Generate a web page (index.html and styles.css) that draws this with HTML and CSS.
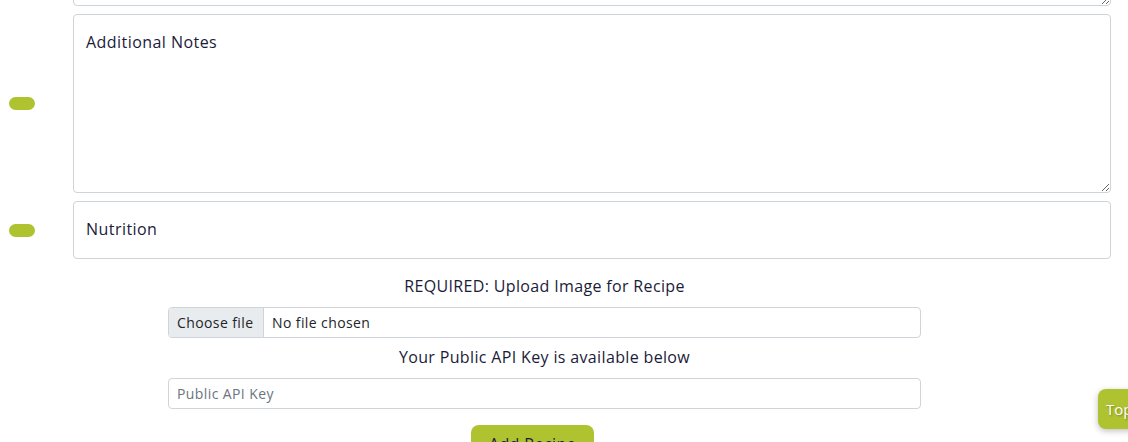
FILE: index.html
```html
<!DOCTYPE html>
<html>
<head>
<meta charset="utf-8">
<link rel="stylesheet" href="styles.css">
</head>
<body>
<div class="form">
  <div class="row row-top">
    <div class="side"></div>
    <textarea class="field area-top"></textarea>
  </div>
  <div class="row">
    <div class="side"><span class="pill"></span></div>
    <textarea class="field area-notes" placeholder="Additional Notes"></textarea>
  </div>
  <div class="row">
    <div class="side"><span class="pill"></span></div>
    <input class="field input-big" type="text" placeholder="Nutrition">
  </div>
  <div class="center">
    <p class="label">REQUIRED: Upload Image for Recipe</p>
    <div class="file">
      <span class="file-btn">Choose file</span>
      <span class="file-name">No file chosen</span>
    </div>
    <p class="label">Your Public API Key is available below</p>
    <input class="small-input" type="text" placeholder="Public API Key">
    <div class="submit-wrap"><button class="submit">Add Recipe</button></div>
  </div>
</div>
<button class="top-btn">Top</button>
</body>
</html>
```

FILE: styles.css
```css
html, body {
  margin: 0;
  padding: 0;
  background: #ffffff;
  overflow: hidden;
  height: 442px;
}
body {
  font-family: "Open Sans", "Noto Sans", sans-serif;
  color: #1b1b3a;
  position: relative;
}
.form {
  margin-top: -59px;
}
.row {
  display: flex;
  align-items: center;
  margin-bottom: 8px;
}
.side {
  width: 73px;
  flex: none;
  display: flex;
  padding-left: 9px;
  box-sizing: border-box;
}
.pill {
  display: block;
  width: 26px;
  height: 13px;
  border-radius: 7px;
  background: #afc22f;
}
.field {
  width: 1038px;
  box-sizing: border-box;
  border: 1px solid #ced4da;
  border-radius: 4px;
  font-family: inherit;
  font-size: 16px;
  letter-spacing: 0.45px;
  color: #1b1b3a;
  padding: 15px 12px;
  background: #fff;
  line-height: 24px;
  margin: 0;
}
.field::placeholder {
  color: #1b1b3a;
  opacity: 1;
}
.area-top {
  height: 65px;
  resize: vertical;
  display: block;
}
.area-notes {
  height: 179px;
  resize: vertical;
  display: block;
}
.input-big {
  height: 58px;
  padding: 14px 12px 16px;
}
.center {
  width: 753px;
  margin-left: 168px;
  display: flex;
  flex-direction: column;
  align-items: center;
}
.label {
  margin: 7px 0 9px;
  font-size: 16px;
  letter-spacing: 0.35px;
  line-height: 24px;
}
.file {
  width: 100%;
  box-sizing: border-box;
  height: 31px;
  border: 1px solid #ced4da;
  border-radius: 4px;
  display: flex;
  overflow: hidden;
  font-size: 14px;
  letter-spacing: 0.4px;
  color: #212529;
}
.file-btn {
  background: #e9ecef;
  border-right: 1px solid #ced4da;
  padding: 0 8px;
  display: flex;
  align-items: center;
  width: 95px;
  box-sizing: border-box;
}
.file-name {
  padding: 0 8px;
  display: flex;
  align-items: center;
}
.small-input {
  width: 100%;
  box-sizing: border-box;
  height: 31px;
  border: 1px solid #ced4da;
  border-radius: 4px;
  padding: 0 8px;
  font-family: inherit;
  font-size: 14px;
  letter-spacing: 0.4px;
  margin: 0;
}
.small-input::placeholder {
  color: #6c757d;
}
.submit-wrap {
  margin-top: 16px;
  width: 100%;
  display: flex;
  justify-content: flex-start;
  padding-left: 303px;
  box-sizing: border-box;
}
.submit {
  background: #afc22f;
  border: none;
  border-radius: 8px;
  width: 123px;
  height: 38px;
  font-family: inherit;
  font-size: 16px;
  letter-spacing: 0.4px;
  color: #1b1b3a;
  padding: 0;
}
.top-btn {
  position: absolute;
  left: 1098px;
  top: 389px;
  width: 50px;
  height: 40px;
  background: #afc22f;
  border: none;
  border-radius: 8px;
  color: #fff;
  font-family: inherit;
  font-size: 15px;
  text-align: left;
  padding: 0 0 0 8px;
  box-shadow: 0 2px 6px rgba(0,0,0,0.25);
  text-shadow: 1px 1px 2px rgba(0,0,0,0.3);
}
```
